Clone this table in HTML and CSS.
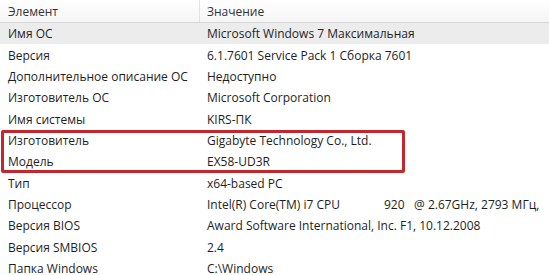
FILE: index.html
```html
<html lang="ru">
  <head>
    <link rel="stylesheet" href="styles.css">
  </head>
  <body>
    <div id="info-list">
      <div class="row head">
        <div class="cell name">Элемент</div>
        <div class="cell">Значение</div>
      </div>
      <div class="row selected">
        <div class="cell">Имя ОС</div>
        <div class="cell">Microsoft Windows 7 Максимальная</div>
      </div>
      <div class="row">
        <div class="cell">Версия</div>
        <div class="cell">6.1.7601 Service Pack 1 Сборка 7601</div>
      </div>
      <div class="row">
        <div class="cell">Дополнительное описание ОС</div>
        <div class="cell">Недоступно</div>
      </div>
      <div class="row">
        <div class="cell">Изготовитель ОС</div>
        <div class="cell">Microsoft Corporation</div>
      </div>
      <div class="row">
        <div class="cell">Имя системы</div>
        <div class="cell">KIRS-ПК</div>
      </div>
      <div class="marked">
        <div class="row">
          <div class="cell">Изготовитель</div>
          <div class="cell">Gigabyte Technology Co., Ltd.</div>
        </div>
        <div class="row">
          <div class="cell">Модель</div>
          <div class="cell">EX58-UD3R</div>
        </div>
      </div>
      <div class="row">
        <div class="cell">Тип</div>
        <div class="cell">x64-based PC</div>
      </div>
      <div class="row">
        <div class="cell">Процессор</div>
        <div class="cell"><span class="cpu-name">Intel(R) Core(TM) i7 CPU</span><span class="cpu-model">920</span>@ 2.67GHz, 2793 МГц,</div>
      </div>
      <div class="row">
        <div class="cell">Версия BIOS</div>
        <div class="cell">Award Software International, Inc. F1, 10.12.2008</div>
      </div>
      <div class="row">
        <div class="cell">Версия SMBIOS</div>
        <div class="cell">2.4</div>
      </div>
      <div class="row">
        <div class="cell">Папка Windows</div>
        <div class="cell">C:\Windows</div>
      </div>
    </div>
  </body>
</html>
```

FILE: styles.css
```css
body, html {
  margin: 0;
  width: 100%;
  height: 100%;
  overflow: hidden;
  background: #fff;
  color: #1e1e1e;
  font-family: "Open Sans", "DejaVu Sans", sans-serif;
  font-size: 12px;
}
#info-list {
  display: flex;
  flex-direction: column;
}
.row {
  display: grid;
  grid-template-columns: 200px 1fr;
  height: 21.35px;
  align-items: center;
  white-space: nowrap;
}
.cell {
  padding-left: 8px;
  overflow: hidden;
}
.cell + .cell {
  padding-left: 7px;
}
.row.head {
  height: 22px;
  background: linear-gradient(#ffffff, #f5f5f5);
  border-bottom: solid 1px #d5d5d5;
  color: #333;
}
.row.head .name {
  border-right: solid 1px #e2e2e2;
  height: 100%;
  display: flex;
  align-items: center;
}
.row.selected {
  background: #ececec;
}
/* processor string keeps the wide gaps of the raw value */
.cpu-name {
  display: inline-block;
  width: 177px;
}
.cpu-model {
  display: inline-block;
  width: 30px;
}
.marked {
  position: relative;
}
.marked::after {
  content: "";
  position: absolute;
  left: 1px;
  width: 398px;
  top: 0;
  bottom: -1px;
  border: solid 3px #c1272d;
  border-radius: 2px;
}
```
